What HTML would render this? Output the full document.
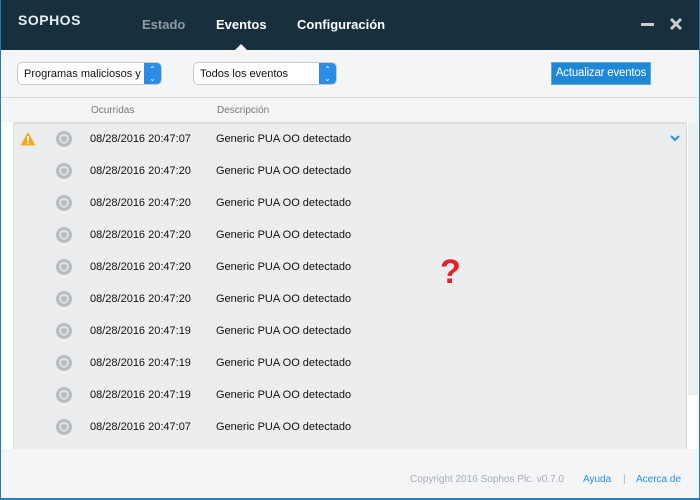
<!DOCTYPE html>
<html><head><meta charset="utf-8"><style>
*{margin:0;padding:0;box-sizing:border-box}
body{width:700px;height:500px;overflow:hidden;font-family:"Liberation Sans",sans-serif;background:#f4f5f7;position:relative}
.frame{position:absolute;inset:0;border-left:1px solid #1f7fc0;border-right:1px solid #1f7fc0;border-bottom:2px solid #1f7fc0;pointer-events:none;z-index:10}
.hdr{position:absolute;left:0;top:0;width:700px;height:50px;background:#182f3e}
.logo{position:absolute;left:18px;top:12px;color:#e8ecef;font-weight:bold;font-size:14px;letter-spacing:0.5px}
.tab{position:absolute;top:17px;font-size:13px;font-weight:bold;color:#fff;white-space:nowrap}
.caret{position:absolute;left:235px;top:44px;width:0;height:0;border-left:6px solid transparent;border-right:6px solid transparent;border-bottom:6px solid #f4f5f7}
.sel{position:absolute;top:62px;height:23px;background:#fff;border:1px solid #c8cbce;border-radius:5px;font-size:11px;padding:5px 6px;color:#111;overflow:hidden;white-space:nowrap}
.sel .ar{position:absolute;right:0;top:0;width:17px;height:21px;background:#2a8ce8;border-radius:0 4px 4px 0;color:#fff;font-size:8px;text-align:center;line-height:9px;padding-top:2px}
.btn{position:absolute;left:551px;top:62px;width:100px;height:23px;background:#1f88d6;border:1px solid #60a8e0;color:#fff;font-size:11.5px;text-align:center;line-height:21px;white-space:nowrap;letter-spacing:-0.2px}
.sep{position:absolute;left:0;top:97px;width:700px;height:1px;background:#d8dadc}
.colh{position:absolute;top:105px;font-size:10px;color:#777}
.white{position:absolute;left:1px;top:122px;width:12px;height:327px;background:#fff}
.list{position:absolute;left:13px;top:122px;width:674px;height:327px;background:#ecedef;border-top:2px solid #dcdee0;border-left:1px solid #dcdee0;border-right:1px solid #d8d8d8}
.track{position:absolute;left:687px;top:122px;width:12px;height:327px;background:#fff}
.thumb{position:absolute;left:688px;top:122px;width:10px;height:273px;background:#eceef0}
.row{position:absolute;left:0;height:32px;width:672px;font-size:11px;color:#111;white-space:nowrap}
.row .d{position:absolute;left:76px;top:9px}
.row .t{position:absolute;left:202px;top:9px}
.row svg.s{position:absolute;left:41px;top:6px}
.foot{position:absolute;top:474px;font-size:10px}
</style></head><body>
<div class="hdr">
<div class="logo">SOPHOS</div>
<div class="tab" style="left:142px;color:#8f9ba3">Estado</div>
<div class="tab" style="left:216px">Eventos</div>
<div class="tab" style="left:297px">Configuración</div>
<div style="position:absolute;left:641px;top:23px;width:13px;height:3px;background:#c8ced2"></div>
<svg style="position:absolute;left:669px;top:17px" width="14" height="14"><path d="M2 2L12 12M12 2L2 12" stroke="#c8ced2" stroke-width="3"/></svg>
<div class="caret"></div>
</div>
<div class="sel" style="left:17px;width:145px">Programas maliciosos y …<div class="ar">⌃<br>⌄</div></div>
<div class="sel" style="left:193px;width:144px">Todos los eventos<div class="ar">⌃<br>⌄</div></div>
<div class="btn">Actualizar eventos</div>
<div class="sep"></div>
<div class="colh" style="left:91px">Ocurridas</div>
<div class="colh" style="left:217px">Descripción</div>
<div class="white"></div>
<div class="track"></div><div class="thumb"></div>
<div class="list" id="l">
<svg style="position:absolute;left:6px;top:7px" width="16" height="15"><path d="M8 1L15.5 14.5H0.5Z" fill="#f5a623"/><rect x="7.2" y="5" width="1.6" height="5.5" fill="#fff"/><rect x="7.2" y="11.5" width="1.6" height="1.6" fill="#fff"/></svg>
<svg style="position:absolute;left:656px;top:11px" width="10" height="7"><path d="M1 1L5 5L9 1" stroke="#2a8ce8" stroke-width="2" fill="none"/></svg>
</div>
<div class="foot" style="left:410px;color:#a8acb0">Copyright 2016 Sophos Plc. v0.7.0</div>
<div class="foot" style="left:583px;color:#2a8ce8">Ayuda</div>
<div class="foot" style="left:623px;color:#a8acb0">|</div>
<div class="foot" style="left:636px;color:#2a8ce8">Acerca de</div>
<div style="position:absolute;left:440px;top:253px;color:#e8202a;font-size:34px;font-weight:bold">?</div>
<div class="frame"></div>
<script>
var d=["07","20","20","20","20","20","19","19","19","07"],h="";
for(var i=0;i<10;i++){h+='<div class="row" style="top:'+(i*32)+'px"><svg class="s" width="18" height="18"><circle cx="9" cy="9" r="8" fill="#b9bcbf"/><path d="M9 4L13.5 5.5V9C13.5 11.5 11.5 13 9 14C6.5 13 4.5 11.5 4.5 9V5.5Z" fill="#e4e6e8"/><path d="M9 6L12 7V9C12 10.6 10.7 11.6 9 12.3C7.3 11.6 6 10.6 6 9V7Z" fill="#b9bcbf"/></svg><span class="d">08/28/2016 20:47:'+d[i]+'</span><span class="t">Generic PUA OO detectado</span></div>';}
document.getElementById('l').insertAdjacentHTML('beforeend',h);
</script>
</body></html>
